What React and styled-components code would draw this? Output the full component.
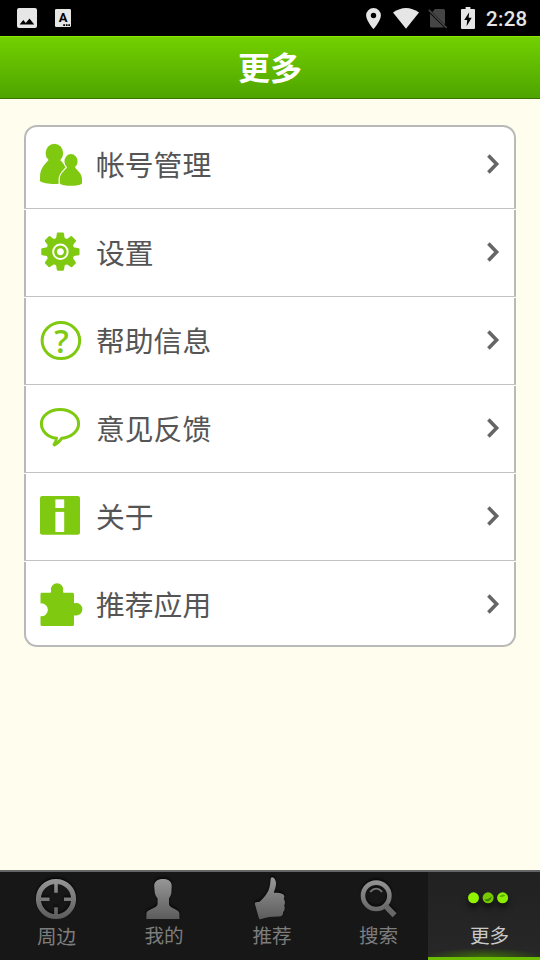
import React, { Fragment } from 'react';
import styled, { createGlobalStyle } from 'styled-components';

const green = '#80c911';

const AccountIcon = () => (
  <Icon viewBox='0 0 44 44'>
    <ellipse cx='15.4' cy='10' rx='8.8' ry='9.2' />
    <path d='M10 16.5C7.5 20 1 24 1 34V38C5 42 26 42 30 38V34C30 24 23.3 20 20.8 16.5Z' />
    <path
      d='M28 24C26.8 27 20.8 30 20.8 36V40.5C24 43.6 40 43.6 43 40.5V36C43 30 37.2 27 36 24A6.6 7.2 0 1 0 28 24Z'
      stroke='#fff'
      strokeWidth='2.4'
      paintOrder='stroke'
    />
  </Icon>
);

const SettingsIcon = () => (
  <Icon viewBox='0 0 44 44'>
    <g transform='translate(21.4 20.7)'>
      {[0, 45, 90, 135, 180, 225, 270, 315].map((angle) => (
        <path
          key={angle}
          d='M-4.6 -12L-3.5 -18.3Q-3.3 -19.1 -2.5 -19.1H2.5Q3.3 -19.1 3.5 -18.3L4.6 -12Z'
          transform={`rotate(${angle})`}
        />
      ))}
      <circle r='14.2' />
      <circle r='8.2' fill='#fff' />
      <circle r='4.9' fill='none' stroke={green} strokeWidth='2.8' />
    </g>
  </Icon>
);

const HelpIcon = () => (
  <Icon viewBox='0 0 44 44'>
    <ellipse cx='21.9' cy='21.6' rx='18.8' ry='18' fill='none' stroke={green} strokeWidth='3' />
    <QuestionMark x='22.4' y='34.2' textAnchor='middle'>
      ?
    </QuestionMark>
  </Icon>
);

const FeedbackIcon = () => (
  <Icon viewBox='0 0 44 44'>
    <path
      d='M17.4 31.3C8.5 30 2.4 24.2 2.4 16.8C2.4 8.7 10.6 2.5 21 2.5S39.6 8.7 39.6 16.8C39.6 24 32.5 30.4 22.7 31.3C20 35 17.8 37 14.5 38.4C16.7 35.8 17.3 34 17.4 31.3Z'
      fill='none'
      stroke={green}
      strokeWidth='3'
    />
  </Icon>
);

const AboutIcon = () => (
  <Icon viewBox='0 0 44 44'>
    <rect x='1' y='1' width='40' height='38.8' rx='2.2' />
    <rect x='16.4' y='4.4' width='8.8' height='8.6' fill='#fff' />
    <rect x='16.4' y='16.9' width='8.8' height='20.1' fill='#fff' />
  </Icon>
);

const AppsIcon = () => (
  <Icon viewBox='0 0 44 44'>
    <path d='M1.5 20.4V11.2Q1.5 9.8 3 9.8H11.5Q12.4 9.2 12 7.2A6.1 6.2 0 1 1 24.1 7.2Q23.7 9.2 24.6 9.8H33.4Q35 9.8 35 11.2V19.8Q35.3 20.5 36.2 20.2A6.1 6.2 0 1 1 36.2 32.4Q35.3 32.1 35 33V41.4Q35 43 33.4 43H3Q1.5 43 1.5 41.4V33.3A6.6 6.5 0 1 0 1.5 20.4Z' />
  </Icon>
);

const items = [
  { label: '帐号管理', icon: <AccountIcon /> },
  { label: '设置', icon: <SettingsIcon /> },
  { label: '帮助信息', icon: <HelpIcon /> },
  { label: '意见反馈', icon: <FeedbackIcon /> },
  { label: '关于', icon: <AboutIcon /> },
  { label: '推荐应用', icon: <AppsIcon /> },
];

const StatusIcons = () => (
  <>
    <StatusSvg width='20' height='20' viewBox='0 0 20 20' $right={18}>
      <path
        fillRule='evenodd'
        d='M2 0H18Q20 0 20 2V18Q20 20 18 20H2Q0 20 0 18V2Q0 0 2 0ZM2.6 16.5H17.2L12.5 10.4L8.8 15L6.3 12Z'
      />
    </StatusSvg>
    <StatusSvg width='16' height='18' viewBox='0 0 16 18' $right={0}>
      <rect width='16' height='18' rx='1.2' />
      <StatusLetter x='8' y='13' textAnchor='middle'>
        A
      </StatusLetter>
      <path d='M8.2 15.2H10V16.9H8.2ZM10.8 15.2H12.6V16.9H10.8ZM13.3 15.2H15V16.9H13.3Z' fill='#000' />
    </StatusSvg>
    <Spacer />
    <StatusSvg width='15' height='21' viewBox='0 0 15 21' $right={12}>
      <path
        fillRule='evenodd'
        d='M7.5 0A7.4 7.4 0 0 0 .1 7.4C.1 12.6 7.5 21 7.5 21S14.9 12.6 14.9 7.4A7.4 7.4 0 0 0 7.5 0ZM7.5 4.8A2.7 2.7 0 1 1 7.5 10.2A2.7 2.7 0 0 1 7.5 4.8Z'
      />
    </StatusSvg>
    <StatusSvg width='26' height='21' viewBox='0 0 26 21' $right={9}>
      <path d='M0 4.6Q13 -4.6 26 4.6L13 20.8Z' />
    </StatusSvg>
    <StatusSvg width='20' height='21' viewBox='0 0 20 21' $right={13}>
      <path d='M7 1H15.4Q17 1 17 2.6V17L4.3 4.1ZM2 5.5L16.2 19.6H3.6Q2 19.6 2 18Z' fill='#454545' />
      <path d='M.8 1.9L18.7 20' stroke='#454545' strokeWidth='1.7' />
    </StatusSvg>
    <StatusSvg width='14' height='22' viewBox='0 0 14 22' $right={11}>
      <path
        fillRule='evenodd'
        d='M4.6 0H9.4V2H13Q14 2 14 3V21Q14 22 13 22H1Q0 22 0 21V3Q0 2 1 2H4.6ZM8.2 5.2L3.2 13H6.2L5.6 19.3L10.7 10.8H7.6Z'
      />
    </StatusSvg>
  </>
);

const tabs = [
  {
    label: '周边',
    low: true,
    icon: (
      <>
        <circle cx='22' cy='22' r='17.6' fill='none' stroke='url(#metal)' strokeWidth='5' />
        <path d='M20.2 7H23.8V15.7H20.2ZM20.2 30.3H23.8V39H20.2ZM7 20.4H15.5V24H7ZM30 20.4H38V24H30Z' />
      </>
    ),
  },
  {
    label: '我的',
    icon: (
      <path d='M21 2C26.6 2 30 4.5 29.7 9.5L29.4 15C29.3 18 27.9 19.5 27 21.5V27C27 31.5 37.4 32 37.4 36.5V42H4.4V36.5C4.4 32 15.6 31.5 15.6 27V21.5C14.4 19.5 13 18 12.7 15L12.2 9.5C12 4.5 15.4 2 21 2Z' />
    ),
  },
  {
    label: '推荐',
    icon: (
      <path d='M21.5 .4C23.5 -.4 25.6 2 26 5.6C26.3 9.4 24.6 12.4 23.8 15.8C27 15.5 30 15.8 33 17.2C35 18.5 34.2 21 33.7 22C35.4 24 35.2 27 34.2 28.4C35.2 31 34.6 33.6 33 35.2C33.4 37.8 31.6 39.6 29 39.5C23 39.4 16.5 40 10.5 42.3Q9.2 42.6 8.8 41L4.9 27Q4.6 25.6 6 25.3L9.6 24.8C13.4 21.5 17.2 16.5 18.6 13C20 9.4 20.4 5.4 20.6 2.2Q20.7 .8 21.5 .4Z' />
    ),
  },
  {
    label: '搜索',
    icon: (
      <>
        <circle cx='20.2' cy='18.8' r='13.2' fill='none' stroke='url(#metal)' strokeWidth='4.6' />
        <path d='M14.2 14.8Q20.1 8.5 26.2 14.8' fill='none' stroke='#777' strokeWidth='1.8' />
        <path d='M29.1 28.5L38.6 38.2' fill='none' stroke='#686868' strokeWidth='5.6' />
      </>
    ),
  },
  {
    label: '更多',
    active: true,
    icon: (
      <>
        <circle cx='7.5' cy='20.8' r='5.5' fill='#91f500' />
        <circle cx='22.1' cy='20.8' r='5.5' fill='#78ca00' />
        <path d='M18.3 22.6Q22.5 22.4 25.6 19.4Q25.6 23.4 21.5 24.4Q19.4 24.4 18.3 22.6Z' fill='#438300' />
        <circle cx='36.6' cy='20.8' r='5.5' fill='#8bed00' />
        <path d='M33.4 19.5Q36.2 16.5 39.4 18.2Q36.5 21 33.4 19.5Z' fill='#61a900' />
      </>
    ),
  },
];

const App = () => {
  return (
    <Screen>
      <GlobalStyle />
      <StatusBar>
        <StatusIcons />
        <Clock>2:28</Clock>
      </StatusBar>
      <Header>更多</Header>
      <Content>
        <Menu>
          {items.map(({ label, icon }, i) => (
            <Fragment key={label}>
              {i > 0 && <Divider />}
              <MenuItem>
                {icon}
                <MenuLabel>{label}</MenuLabel>
                <Chevron viewBox='0 0 14 22'>
                  <path d='M2.4 2.6L10.6 11L2.4 19.4' />
                </Chevron>
              </MenuItem>
            </Fragment>
          ))}
        </Menu>
      </Content>
      <TabBar>
        {tabs.map(({ label, icon, active, low }) => (
          <Tab key={label} $active={active}>
            <TabIcon viewBox='0 0 44 44' $active={active}>
              <defs>
                <linearGradient id='metal' x1='0' y1='0' x2='0' y2='44' gradientUnits='userSpaceOnUse'>
                  <stop offset='0' stopColor='#999' />
                  <stop offset='1' stopColor='#595959' />
                </linearGradient>
              </defs>
              {icon}
            </TabIcon>
            <TabLabel $active={active} $low={low}>
              {label}
            </TabLabel>
          </Tab>
        ))}
      </TabBar>
    </Screen>
  );
};

export default App;

const GlobalStyle = createGlobalStyle`
  * {
    box-sizing: border-box;
  }

  body {
    margin: 0;
    overflow: hidden;
    font-family: 'Noto Sans CJK SC', sans-serif;
  }
`;

const Screen = styled.div`
  display: flex;
  flex-direction: column;
  width: 540px;
  height: 960px;
  background: #fffdee;
`;

const StatusBar = styled.div`
  display: flex;
  align-items: center;
  height: 36px;
  padding: 0 12px 0 17px;
  background: #000;
`;

const StatusSvg = styled.svg`
  flex: none;
  margin-right: ${({ $right }) => $right}px;
  fill: #e6e6e6;
`;

const StatusLetter = styled.text`
  font: bold 13px Roboto, sans-serif;
  fill: #000;
`;

const Spacer = styled.div`
  flex: 1;
`;

const Clock = styled.div`
  width: 42px;
  font: 500 20.5px/36px Roboto, sans-serif;
  letter-spacing: 0.3px;
  color: #e6e6e6;
  padding-top: 1px;
`;

const Header = styled.div`
  height: 63px;
  background: linear-gradient(#73d000, #4ea400);
  border-top: 1px solid #8be600;
  border-bottom: 1px solid #397500;
  color: #fff;
  font-size: 32px;
  font-weight: bold;
  line-height: 59px;
  text-align: center;
`;

const Content = styled.div`
  flex: 1;
  padding: 26px 24px 0;
`;

const Menu = styled.div`
  display: flex;
  flex-direction: column;
`;

const Divider = styled.div`
  height: 2px;
  background: #fff;
  border-top: 1px solid #c2c2c2;
`;

const MenuItem = styled.div`
  display: flex;
  align-items: center;
  height: 86px;
  padding: 0 14px 0 13px;
  background: #fff;
  border: solid #b9b9b9;
  border-width: 0 2px;

  &:first-child {
    height: 83px;
    padding-bottom: 5px;
    border-top-width: 2px;
    border-radius: 13px 13px 0 0;
  }

  &:last-child {
    height: 85px;
    padding-top: 3px;
    border-bottom-width: 2px;
    border-radius: 0 0 13px 13px;
  }
`;

const Icon = styled.svg`
  flex: none;
  width: 44px;
  height: 44px;
  fill: ${green};
  overflow: visible;
`;

const QuestionMark = styled.text`
  font: 600 32px 'Open Sans', sans-serif;
`;

const MenuLabel = styled.div`
  flex: 1;
  padding: 0 0 2px 13px;
  color: #555;
  font-size: 28.8px;
  line-height: 42px;
`;

const Chevron = styled.svg`
  width: 14px;
  height: 22px;
  margin-bottom: 2px;
  fill: none;
  stroke: #666;
  stroke-width: 3.6px;
`;

const TabBar = styled.div`
  display: grid;
  grid-template-columns: 110px 105px 111px 102px 112px;
  height: 90px;
  border-top: 2px solid #626465;
  background: #171717;
`;

const Tab = styled.div`
  display: flex;
  flex-direction: column;
  align-items: center;
  padding: 5px 0 0 ${({ $active }) => ($active ? 8 : 2)}px;
  border-bottom: ${({ $active }) => ($active ? '3px solid #6cbd00' : 'none')};
  background: ${({ $active }) =>
    $active
      ? 'radial-gradient(60px 9px at 50% 100%, #3c6b0a, transparent), linear-gradient(#212121, #272727)'
      : 'none'};
`;

const TabIcon = styled.svg`
  flex: none;
  width: 44px;
  height: 44px;
  fill: url(#metal);
  filter: drop-shadow(0 ${({ $active }) => ($active ? '4px 3px' : '-2px 1px')} #0009);
`;

const TabLabel = styled.div`
  padding: ${({ $low }) => ($low ? 1 : 0)}px 0 0 ${({ $active }) => ($active ? 3 : 1)}px;
  color: ${({ $active }) => ($active ? '#c9c9c9' : '#7d7d7d')};
  font-size: 19.6px;
  line-height: 28px;
`;
